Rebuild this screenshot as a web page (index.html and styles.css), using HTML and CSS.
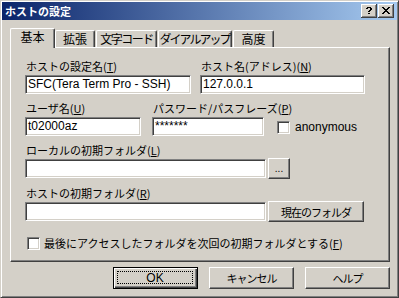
FILE: index.html
```html
<!DOCTYPE html>
<html>
<head>
<meta charset="utf-8">
<link rel="stylesheet" href="styles.css">
</head>
<body>
<div class="window">
  <div class="titlebar">
    <span class="title">ホストの設定</span>
    <div class="tb-buttons">
      <span class="tb-btn"><svg width="6" height="7" viewBox="0 0 6 7" shape-rendering="crispEdges"><path d="M1 0h4v1h-4z M0 1h2v1h-2z M4 1h2v1h-2z M4 2h2v1h-2z M3 3h2v1h-2z M2 4h2v1h-2z M2 6h2v1h-2z" fill="#000"/></svg></span>
      <span class="tb-btn"><svg width="8" height="7" viewBox="0 0 8 7" shape-rendering="crispEdges"><path d="M0 0h2v1h-2z M6 0h2v1h-2z M1 1h2v1h-2z M5 1h2v1h-2z M2 2h4v1h-4z M3 3h2v1h-2z M2 4h4v1h-4z M1 5h2v1h-2z M5 5h2v1h-2z M0 6h2v1h-2z M6 6h2v1h-2z" fill="#000"/></svg></span>
    </div>
  </div>
  <div class="body">
    <div class="tabs">
      <div class="tab active w45">基本</div>
      <div class="tab w40">拡張</div>
      <div class="tab kana w61 sp">文字コード</div>
      <div class="tab kana2 w74 sp">ダイアルアップ</div>
      <div class="tab w41 sp">高度</div>
    </div>
    <div class="panel">
      <div class="row">
        <div class="field w166">
          <div class="label">ホストの設定名(<u>T</u>)</div>
          <div class="input">SFC(Tera Term Pro - SSH)</div>
        </div>
        <div class="field w165 ml9">
          <div class="label">ホスト名(アドレス)(<u>N</u>)</div>
          <div class="input">127.0.0.1</div>
        </div>
      </div>
      <div class="row">
        <div class="field w116">
          <div class="label">ユーザ名(<u>U</u>)</div>
          <div class="input">t02000az</div>
        </div>
        <div class="field w112 ml11">
          <div class="label">パスワード/パスフレーズ(<u>P</u>)</div>
          <div class="input">*******</div>
        </div>
        <div class="check anon">
          <span class="box"></span>
          <span class="ctext latin">anonymous</span>
        </div>
      </div>
      <div class="row">
        <div class="field">
          <div class="label">ローカルの初期フォルダ(<u>L</u>)</div>
          <div class="inrow">
            <div class="input w241"></div>
            <div class="btn small w22">...</div>
          </div>
        </div>
      </div>
      <div class="row">
        <div class="field">
          <div class="label">ホストの初期フォルダ(<u>R</u>)</div>
          <div class="inrow">
            <div class="input w241"></div>
            <div class="btn tight w96">現在のフォルダ</div>
          </div>
        </div>
      </div>
      <div class="check last">
        <span class="box"></span>
        <span class="ctext">最後にアクセスしたフォルダを次回の初期フォルダとする(<u>F</u>)</span>
      </div>
    </div>
    <div class="buttons">
      <div class="btn default dlg"><span class="focus latin">OK</span></div>
      <div class="btn dlg tight">キャンセル</div>
      <div class="btn dlg tight">ヘルプ</div>
    </div>
  </div>
</div>
</body>
</html>
```
FILE: styles.css
```css
html, body {
  margin: 0;
  padding: 0;
  background: #D4D0C8;
}
body {
  font-family: "Noto Sans CJK JP", sans-serif;
  font-size: 11px;
  color: #000;
}
.latin {
  font-family: "Liberation Sans", sans-serif;
  font-size: 12px;
}
.window {
  box-sizing: border-box;
  width: 399px;
  height: 298px;
  background: #D4D0C8;
  border: 1px solid;
  border-color: #D4D0C8 #404040 #404040 #D4D0C8;
  box-shadow: inset 1px 1px #fff, inset -1px -1px #808080;
  padding: 1px;
}
.titlebar {
  height: 18px;
  background: linear-gradient(to right, #0A246A, #A6CAF0);
  display: flex;
  align-items: center;
  justify-content: space-between;
  padding: 0 3px 0 3px;
}
.title {
  color: #fff;
  font-weight: bold;
  font-size: 11px;
  line-height: 18px;
}
.tb-buttons {
  display: flex;
  gap: 1px;
}
.tb-btn {
  box-sizing: border-box;
  width: 16px;
  height: 14px;
  background: #D4D0C8;
  border-right: 1px solid #404040;
  border-bottom: 1px solid #404040;
  box-shadow: inset 1px 1px #fff, inset -1px -1px #808080;
  display: flex;
  align-items: center;
  justify-content: center;
}
.tb-btn svg { display: block; }
.body {
  padding: 0 7px 0 8px;
}
.tabs {
  display: flex;
  align-items: flex-end;
  height: 19px;
  margin-top: 8px;
}
.tab {
  box-sizing: border-box;
  height: 17px;
  border-top: 1px solid #fff;
  border-left: 1px solid #fff;
  border-right: 1px solid #404040;
  border-top-left-radius: 2px;
  border-top-right-radius: 2px;
  box-shadow: inset -1px 0 #808080;
  text-align: center;
  line-height: 15px;
  white-space: nowrap;
  font-size: 12px;
}
.tab.kana { letter-spacing: -1.5px; }
.tab.kana2 { letter-spacing: -2px; text-indent: -1px; }
.tab.active {
  height: 20px;
  margin-bottom: -1px;
  position: relative;
  z-index: 1;
  background: #D4D0C8;
  line-height: 16px;
}
.tab.sp { margin-left: 1px; }
.w45 { width: 45px; }
.w40 { width: 40px; }
.w61 { width: 61px; }
.w74 { width: 74px; }
.w41 { width: 41px; }
.panel {
  box-sizing: border-box;
  height: 215px;
  border: 1px solid;
  border-color: #fff #404040 #404040 #fff;
  box-shadow: inset -1px -1px #808080;
  padding: 12px 0 0 14px;
}
.row {
  display: flex;
  align-items: flex-end;
  margin-bottom: 8px;
}
.field {
  display: flex;
  flex-direction: column;
}
.w166 { width: 166px; }
.w165 { width: 165px; }
.w116 { width: 116px; }
.w112 { width: 112px; }
.w241 { width: 241px; }
.w22 { width: 22px; }
.w96 { width: 96px; }
.ml9 { margin-left: 9px; }
.ml11 { margin-left: 11px; }
.label {
  height: 15px;
  line-height: 13px;
  padding-left: 1px;
  white-space: nowrap;
}
.input {
  box-sizing: border-box;
  height: 19px;
  background: #fff;
  border: 1px solid;
  border-color: #808080 #fff #fff #808080;
  box-shadow: inset 1px 1px #404040, inset -1px -1px #D4D0C8;
  padding: 0 2px;
  line-height: 17px;
  white-space: nowrap;
  overflow: hidden;
  font-family: "Liberation Sans", sans-serif;
  font-size: 12px;
}
.inrow {
  display: flex;
  align-items: flex-start;
  gap: 2px;
}
.btn {
  box-sizing: border-box;
  background: #D4D0C8;
  border: 1px solid;
  border-color: #fff #404040 #404040 #fff;
  box-shadow: inset -1px -1px #808080;
  display: flex;
  align-items: center;
  justify-content: center;
  white-space: nowrap;
}
.btn.tight { letter-spacing: -1px; }
.inrow .btn {
  height: 21px;
  margin-top: -1px;
}
.btn.small {
  font-family: "Liberation Sans", sans-serif;
  font-size: 10px;
  align-items: flex-end;
  padding-bottom: 4px;
}
.check {
  display: flex;
  align-items: center;
  white-space: nowrap;
}
.box {
  box-sizing: border-box;
  width: 13px;
  height: 13px;
  flex: none;
  background: #fff;
  border: 1px solid;
  border-color: #808080 #fff #fff #808080;
  box-shadow: inset 1px 1px #404040, inset -1px -1px #D4D0C8;
}
.anon {
  margin-left: 13px;
  margin-bottom: 2px;
}
.anon .ctext { margin-left: 5px; }
.last {
  margin-top: 13px;
  margin-left: 2px;
}
.last .ctext { margin-left: 4px; }
.buttons {
  display: flex;
  justify-content: flex-end;
  gap: 11px;
  margin-top: 5px;
}
.dlg {
  width: 85px;
  height: 22px;
}
.btn.default {
  border-color: #000;
  box-shadow: inset 1px 1px #fff, inset -1px -1px #404040, inset -2px -2px #808080;
  padding: 3px 4px 4px 3px;
}
.focus {
  flex: 1;
  align-self: stretch;
  border: 1px dotted #000;
  display: flex;
  align-items: center;
  justify-content: center;
  line-height: 12px;
}
```
